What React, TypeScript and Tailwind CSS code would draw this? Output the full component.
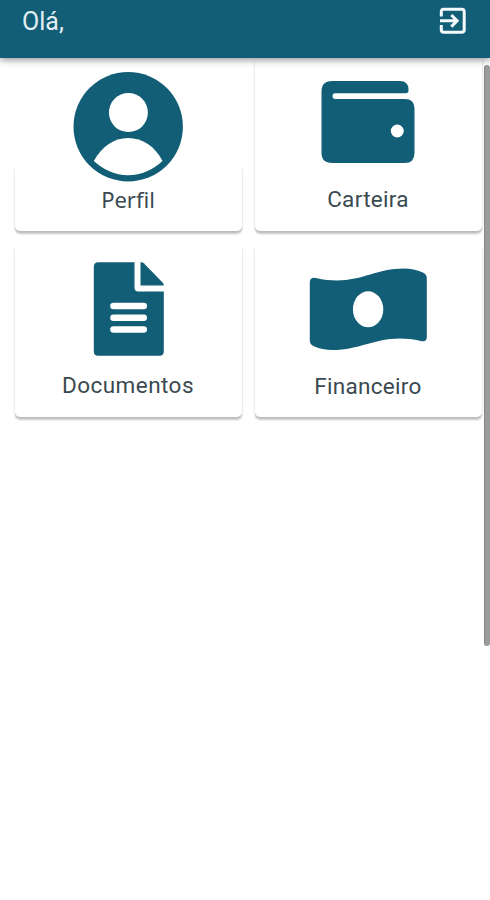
import type { ReactNode } from "react";

function ExitIcon() {
  return (
    <svg width="28" height="28" viewBox="0 0 28 28" fill="none" stroke="#f4fafc" strokeWidth="3">
      <path d="M2.3 9.5V4.8Q2.3 2.3 4.8 2.3H22.7Q25.2 2.3 25.2 4.8V22.7Q25.2 25.2 22.7 25.2H4.8Q2.3 25.2 2.3 22.7V18" />
      <path d="M1 13.8H18M12.3 8L18.1 13.8L12.3 19.6" />
    </svg>
  );
}

function ProfileIcon() {
  return (
    <svg width="110" height="111" viewBox="0 0 110 111">
      <circle cx="55.2" cy="55.7" r="54.7" fill="#125e76" />
      <circle cx="55.4" cy="41.6" r="19.5" fill="#fff" />
      <path d="M20.8 90C29 75.5 41 67 55 67C69.5 67 82 75.5 89.5 90C80.5 98.5 68.5 104.3 55 104.3C42 104.3 30 98.5 20.8 90Z" fill="#fff" />
    </svg>
  );
}

function WalletIcon() {
  return (
    <svg width="94" height="82" viewBox="0 0 94 82" fill="#125e76">
      <path
        fillRule="evenodd"
        d="M11 0H79Q87.5 0 87.5 8.5V9.5Q87.5 12.2 84.8 12.2H14.5Q11.5 12.2 11.5 15Q11.5 18 14.5 18H84Q93.5 18 93.5 27.5V72Q93.5 82 83.5 82H11Q0.5 82 0.5 71.5V10.5Q0.5 0 11 0ZM76.3 43.5A6.5 6.5 0 1 0 76.3 56.5A6.5 6.5 0 1 0 76.3 43.5Z"
      />
    </svg>
  );
}

function DocumentIcon() {
  return (
    <svg width="71" height="94" viewBox="0 0 71 94" fill="#125e76">
      <g transform="translate(0.8 0.3)">
        <path d="M4.5 0H40.7V25.5Q40.7 29.2 44.4 29.2H70V89Q70 93.5 65.5 93.5H4.5Q0 93.5 0 89V4.5Q0 0 4.5 0Z" />
        <path d="M46.7 0H47.5Q49 0 50 1L69 20.5Q70 21.6 70 23.3H46.7Z" />
        <path d="M19.7 43.7H49.9M19.7 55.4H49.9M19.7 67.2H49.9" stroke="#fff" strokeWidth="6.6" strokeLinecap="round" />
      </g>
    </svg>
  );
}

function MoneyIcon() {
  return (
    <svg width="118" height="84" viewBox="0 0 118 84">
      <g transform="translate(0.8 0)">
        <path
          d="M0 14.5Q0 9 6 10C46 19 62 0.5 94 0.5Q104 0.5 113 4.5Q117 6.2 117 10V69Q117 74.500 111 73C72 64 55 82 23 82Q12 82 3.5 78Q0 76 0 72.5Z"
          fill="#125e76"
        />
        <ellipse cx="58.3" cy="41.3" rx="15.2" ry="18" fill="#fff" />
      </g>
    </svg>
  );
}

type MenuCardProps = {
  children: ReactNode;
  className: string;
};

function MenuCard({ children, className }: MenuCardProps) {
  return (
    <button
      className={`flex flex-col items-center rounded-b-[5px] bg-white pr-px text-[22.5px] leading-7 text-[#3a4a50] shadow-[0_3px_2px_rgba(0,0,0,0.22),0_1px_2px_rgba(0,0,0,0.08)] ${className}`}
    >
      {children}
    </button>
  );
}

export default function App() {
  return (
    <div className="relative h-[900px] w-[490px] overflow-hidden bg-white font-[Roboto,sans-serif]">
      <header className="relative z-10 flex h-[58px] items-start justify-between bg-[#125e76] pl-[22px] pr-[23px] shadow-[0_2px_7px_rgba(0,0,0,0.42)]">
        <h1 className="mt-[5px] text-[25px] font-normal leading-[34px] text-[#e1eff4]">
          Olá,
        </h1>
        <div className="mt-[7px]">
          <ExitIcon />
        </div>
      </header>

      <main className="grid grid-cols-2 gap-x-[13px] gap-y-[15px] pl-[15px] pr-2">
        <MenuCard className="h-[173px]">
          {/* wider than the card, so the sides only show below the avatar */}
          <div className="-mx-1 flex h-[111px] w-[235px] justify-center bg-white pr-px pt-[13px]">
            <ProfileIcon />
          </div>
          <span className="mt-4 font-['Noto_Sans',sans-serif] text-[22px]">Perfil</span>
        </MenuCard>

        <MenuCard className="h-[173px]">
          <div className="mt-[23px] h-[82px] pr-px">
            <WalletIcon />
          </div>
          <span className="mt-[22px] tracking-[0.3px]">Carteira</span>
        </MenuCard>

        <MenuCard className="h-[171px]">
          <div className="mt-4 h-[94px]">
            <DocumentIcon />
          </div>
          <span className="mt-[15px] tracking-[0.45px]">Documentos</span>
        </MenuCard>

        <MenuCard className="h-[171px]">
          <div className="mt-[22px] h-[84px]">
            <MoneyIcon />
          </div>
          <span className="mt-5 tracking-[0.3px]">Financeiro</span>
        </MenuCard>
      </main>

      <div className="absolute right-0 top-[65px] h-[581px] w-[6px] rounded-full border-l border-[#858585] bg-[#9c9c9c]" />
    </div>
  );
}
